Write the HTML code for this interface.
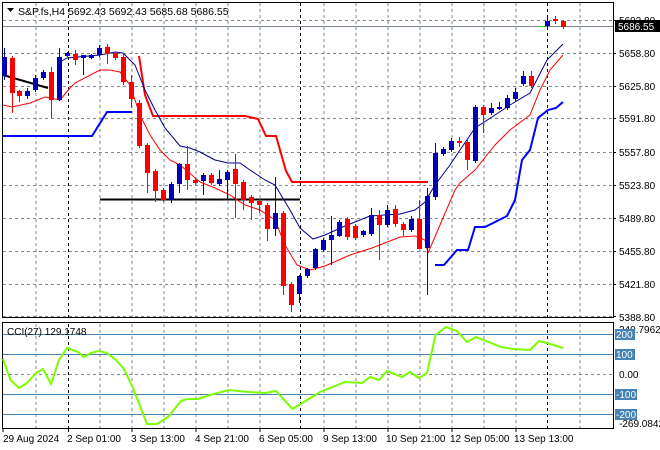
<!DOCTYPE html>
<html><head><meta charset="utf-8"><style>
body{margin:0;background:#fff;width:660px;height:450px;overflow:hidden}
svg{display:block}
text{font-family:"Liberation Sans",sans-serif;font-size:10px;fill:#000}
</style></head><body>
<svg width="660" height="450" viewBox="0 0 660 450" xmlns="http://www.w3.org/2000/svg">
<rect width="660" height="450" fill="#fff"/>
<g stroke="#7d8793" stroke-width="1" stroke-dasharray="3,3" fill="none">
<path d="M36 3V317M100 3V317M132 3V317M164 3V317M196 3V317M228 3V317M260 3V317M324 3V317M356 3V317M388 3V317M420 3V317M452 3V317M484 3V317M516 3V317M580 3V317"/>
<path d="M3 20.5H613M3 53.5H613M3 86.5H613M3 118.5H613M3 152.5H613M3 185.5H613M3 218.5H613M3 251.5H613M3 284.5H613M3 316.5H613"/>
<path d="M36 324V428M100 324V428M132 324V428M164 324V428M196 324V428M228 324V428M260 324V428M324 324V428M356 324V428M388 324V428M420 324V428M452 324V428M484 324V428M516 324V428M580 324V428"/>
<path d="M3 374.5H613"/>
</g>
<g stroke="#000" stroke-dasharray="3,3"><path d="M68.5 3V317M300.5 3V317M547.5 3V317M68.5 324V428M300.5 324V428M547.5 324V428"/></g>
<rect x="2.5" y="2.5" width="611" height="315" fill="none" stroke="#000"/>
<rect x="2.5" y="322.5" width="611" height="106" fill="none" stroke="#000"/>
<path d="M3 26.5H613" stroke="#7d8793"/>
<path d="M3 136H92L107 112H132" stroke="#0000ff" stroke-width="2" fill="none"/>
<path d="M435 265H444L457 250H468L475 227H485L507 216L515 200L522 160L530 150L538 118L548 110L556 108L563 102" stroke="#0000ff" stroke-width="2" fill="none"/>
<path d="M139 56L145 95L153 116H245L258 119L266 136H276L286 171L292 182H428" stroke="#ff0000" stroke-width="2" fill="none"/>
<path d="M3 75L48 88" stroke="#000" stroke-width="2" fill="none"/>
<path d="M100 199.5H300" stroke="#000" stroke-width="2" fill="none"/>
<path d="M60 62L67 58L100 55L115 52L123 53L135 65L145 90L155 110L165 128L180 146L190 148L200 152L215 160L228 163L240 163L250 170L265 180L275 185L290 210L300 228L313 239L325 235L345 226L370 216L400 214L415 210L425 202L435 185L450 165L460 150L475 128L495 115L510 105L530 93L547 60L563 44" stroke="#00008b" fill="none"/>
<path d="M3 105L12 107L30 103L45 97L60 100L70 88L75 83L100 70L110 70L120 72L130 85L140 115L150 135L160 150L170 160L180 165L200 182L215 188L230 195L245 205L260 210L275 220L285 245L297 265L310 270L325 266L350 255L372 248L400 237L415 236L425 240L428 253L440 225L455 190L460 183L475 170L495 145L510 130L530 115L540 90L550 70L563 55" stroke="#ff0000" fill="none"/>
<g stroke="#0000b4">
<path d="M4.5 48V80M27.5 88V99M35.5 75V92M43.5 70V80M59.5 48V101M67.5 52V57M83.5 55V75M91.5 54V59M99.5 45V57M171.5 182V203M179.5 163V193M203.5 173V195M219.5 170V186M227.5 170V200M275.5 177V236M299.5 275V303M307.5 268V278M315.5 248V270M323.5 238V252M331.5 216V265M339.5 220V237M363.5 230V237M371.5 208V236M387.5 205V227M411.5 216V232M427.5 188V295M435.5 143V200M443.5 147V156M451.5 138V152M475.5 105V163M491.5 103V115M499.5 102V110M507.5 95V110M515.5 88V101M523.5 71V86M547.5 18V30"/>
</g>
<g stroke="#ff0000">
<path d="M12.5 56V113M19.5 90V102M51.5 67V118M75.5 50V65M107.5 44V64M115.5 52V60M123.5 53V85M131.5 75V108M139.5 100V148M147.5 143V193M155.5 169V202M163.5 188V202M187.5 146V190M195.5 178V185M211.5 173V185M235.5 154V218M243.5 180V210M251.5 195V220M259.5 199V213M267.5 203V241M283.5 211V295M291.5 282V312M347.5 217V240M355.5 224V240M379.5 210V260M395.5 205V227M403.5 222V236M419.5 200V249M459.5 137V147M467.5 140V170M483.5 105V133M531.5 71V88M555.5 16V24M563.5 20V29"/>
</g>
<g fill="#0000b4">
<rect x="2" y="57" width="5" height="18"/><rect x="25" y="91" width="5" height="5"/><rect x="33" y="78" width="5" height="12"/><rect x="41" y="72" width="5" height="6"/><rect x="57" y="57" width="5" height="43"/><rect x="65" y="53" width="5" height="3"/><rect x="81" y="55" width="5" height="3"/><rect x="89" y="55" width="5" height="3"/><rect x="97" y="48" width="5" height="7"/>
<rect x="169" y="184" width="5" height="16"/><rect x="177" y="164" width="5" height="20"/><rect x="201" y="175" width="5" height="6"/><rect x="217" y="179" width="5" height="5"/><rect x="225" y="172" width="5" height="8"/><rect x="273" y="213" width="5" height="16"/><rect x="297" y="276" width="5" height="18"/><rect x="305" y="269" width="5" height="7"/><rect x="313" y="249" width="5" height="19"/><rect x="321" y="240" width="5" height="10"/><rect x="329" y="235" width="5" height="5"/><rect x="337" y="222" width="5" height="14"/><rect x="361" y="231" width="5" height="4"/><rect x="369" y="215" width="5" height="19"/><rect x="385" y="210" width="5" height="15"/><rect x="409" y="219" width="5" height="11"/><rect x="425" y="196" width="5" height="52"/><rect x="433" y="153" width="5" height="44"/><rect x="441" y="149" width="5" height="5"/><rect x="449" y="141" width="5" height="9"/><rect x="473" y="107" width="5" height="54"/><rect x="489" y="108" width="5" height="5"/><rect x="497" y="107" width="5" height="2"/><rect x="505" y="98" width="5" height="10"/><rect x="513" y="92" width="5" height="7"/><rect x="521" y="76" width="5" height="8"/><rect x="545" y="21" width="5" height="5"/>
</g>
<g fill="#ff0000">
<rect x="10" y="58" width="5" height="35"/><rect x="17" y="91" width="5" height="5"/><rect x="49" y="72" width="5" height="28"/><rect x="73" y="54" width="5" height="6"/><rect x="105" y="47" width="5" height="7"/><rect x="113" y="53" width="5" height="5"/><rect x="121" y="57" width="5" height="25"/><rect x="129" y="82" width="5" height="17"/><rect x="137" y="103" width="5" height="43"/><rect x="145" y="145" width="5" height="28"/><rect x="153" y="171" width="5" height="20"/><rect x="161" y="190" width="5" height="10"/><rect x="185" y="164" width="5" height="16"/><rect x="193" y="180" width="5" height="3"/><rect x="209" y="175" width="5" height="8"/><rect x="233" y="169" width="5" height="15"/><rect x="241" y="182" width="5" height="18"/><rect x="249" y="197" width="5" height="6"/><rect x="257" y="201" width="5" height="4"/><rect x="265" y="205" width="5" height="24"/><rect x="281" y="213" width="5" height="73"/><rect x="289" y="284" width="5" height="21"/><rect x="345" y="219" width="5" height="18"/><rect x="353" y="226" width="5" height="12"/><rect x="377" y="215" width="5" height="10"/><rect x="393" y="209" width="5" height="15"/><rect x="401" y="224" width="5" height="6"/><rect x="417" y="219" width="5" height="30"/><rect x="457" y="141" width="5" height="2"/><rect x="465" y="142" width="5" height="18"/><rect x="481" y="107" width="5" height="8"/><rect x="529" y="76" width="5" height="10"/><rect x="553" y="19" width="5" height="2"/><rect x="561" y="21" width="5" height="6"/>
</g>
<path d="M540 26.5H545" stroke="#00ff00"/>
<path d="M3 334.5H613M3 354.5H613M3 394.5H613M3 414.5H613" stroke="#4682b4"/>
<path d="M3 359L10.5 380L19 388L27 383L36 373L43 369L51 384L59 360L67 348L78 352L84 357L90.5 353L99 351L107 353L116 360L124 369L133 388L147 424L157 424L168 417L181 401L187 399L198 399L210 395L229 390L248 392L265 393L276 391L292.5 409L320 392L345 382L362 383L370 377L379 380L387 371L402 377L410 372L419 378L427 373L435.6 335L446 327L457 331L467 342L476 337L501 347L513 349L530 350L539 341L547 343L563 348" stroke="#7cfc00" stroke-width="2" fill="none"/>
<path d="M613 20.5h3M613 53.5h3M613 86.5h3M613 118.5h3M613 152.5h3M613 185.5h3M613 218.5h3M613 251.5h3M613 284.5h3M613 316.5h3" stroke="#000"/>
<path d="M7 8h7l-3.5 4z" fill="#000"/>
<text x="18" y="15" style="font-size:10.5px">S&amp;P.fs,H4  5692.43 5692.43 5685.68 5686.55</text>
<text x="7" y="335">CCI(27) 129.1748</text>
<g>
<text x="619" y="24">5692.80</text>
<rect x="615" y="20" width="45" height="12" fill="#000"/>
<text x="618" y="30" style="fill:#fff">5686.55</text>
<text x="619" y="57">5658.80</text>
<text x="619" y="90">5625.80</text>
<text x="619" y="122">5591.80</text>
<text x="619" y="156">5557.80</text>
<text x="619" y="189">5523.80</text>
<text x="619" y="222">5489.80</text>
<text x="619" y="255">5455.80</text>
<text x="619" y="288">5421.80</text>
<text x="619" y="321">5388.80</text>
</g>
<g>
<text x="619" y="333">249.7962</text>
<rect x="615" y="329" width="20" height="11" fill="#4682b4"/><text x="616" y="338" style="fill:#fff">200</text>
<rect x="615" y="349" width="20" height="11" fill="#4682b4"/><text x="616" y="358" style="fill:#fff">100</text>
<text x="619" y="378">0.00</text>
<rect x="615" y="389" width="22" height="11" fill="#4682b4"/><text x="616" y="398" style="fill:#fff">-100</text>
<rect x="615" y="409" width="22" height="11" fill="#4682b4"/><text x="616" y="418" style="fill:#fff">-200</text>
<text x="619" y="427">-269.0842</text>
</g>
<path d="M3 428v4M68.5 428v4M132 428v4M196 428v4M260 428v4M324 428v4M388 428v4M452 428v4M516 428v4" stroke="#000"/>
<g>
<text x="3" y="442">29 Aug 2024</text>
<text x="67" y="442">2 Sep 01:00</text>
<text x="131" y="442">3 Sep 13:00</text>
<text x="195" y="442">4 Sep 21:00</text>
<text x="259" y="442">6 Sep 05:00</text>
<text x="323" y="442">9 Sep 13:00</text>
<text x="386" y="442">10 Sep 21:00</text>
<text x="450" y="442">12 Sep 05:00</text>
<text x="514" y="442">13 Sep 13:00</text>
</g>
</svg>
</body></html>
